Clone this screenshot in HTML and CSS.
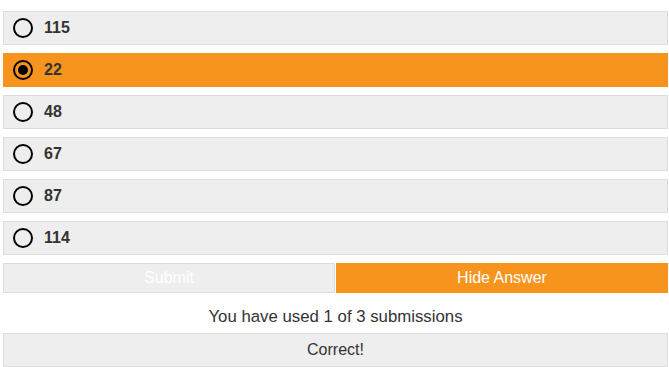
FILE: index.html
```html
<!DOCTYPE html>
<html>
<head>
<meta charset="utf-8">
<link rel="stylesheet" href="styles.css">
</head>
<body>
<div class="quiz">
  <div class="options">
    <label class="option"><span class="radio"></span><span class="val">115</span></label>
    <label class="option selected"><span class="radio checked"></span><span class="val">22</span></label>
    <label class="option"><span class="radio"></span><span class="val">48</span></label>
    <label class="option"><span class="radio"></span><span class="val">67</span></label>
    <label class="option"><span class="radio"></span><span class="val">87</span></label>
    <label class="option"><span class="radio"></span><span class="val">114</span></label>
  </div>
  <div class="actions">
    <button class="btn btn-submit">Submit</button>
    <button class="btn btn-hide">Hide Answer</button>
  </div>
  <div class="used">You have used 1 of 3 submissions</div>
  <div class="result">Correct!</div>
</div>
</body>
</html>
```
FILE: styles.css
```css
html, body {
  margin: 0;
  padding: 0;
  background: #fff;
}
body {
  font-family: "Liberation Sans", Arial, sans-serif;
  color: #333;
}
.quiz {
  padding: 11px 1px 0 3px;
  display: flex;
  flex-direction: column;
}
.options {
  display: flex;
  flex-direction: column;
  gap: 8px;
}
.option {
  box-sizing: border-box;
  height: 34px;
  display: flex;
  align-items: center;
  background: #eeeeee;
  border: 1px solid #dddddd;
  padding-left: 9px;
}
.option.selected {
  background: #f7941e;
  border-color: #f7941e;
}
.radio {
  box-sizing: border-box;
  width: 20px;
  height: 20px;
  border: 2px solid #000;
  border-radius: 50%;
  display: flex;
  align-items: center;
  justify-content: center;
  flex: none;
}
.radio.checked::after {
  content: "";
  width: 10px;
  height: 10px;
  border-radius: 50%;
  background: #000;
}
.val {
  margin-left: 11px;
  font-weight: bold;
  font-size: 16px;
  color: #333;
}
.actions {
  margin-top: 8px;
  display: flex;
  gap: 1px;
}
.btn {
  flex: 1;
  box-sizing: border-box;
  height: 30px;
  font-family: "Liberation Sans", Arial, sans-serif;
  font-size: 16px;
  color: #fff;
  padding: 0;
  margin: 0;
}
.btn-submit {
  background: #eeeeee;
  border: 1px solid #dddddd;
}
.btn-hide {
  background: #f7941e;
  border: 1px solid #f7941e;
}
.used {
  height: 40px;
  box-sizing: border-box;
  padding-top: 7px;
  line-height: 33px;
  text-align: center;
  font-size: 16.8px;
  color: #333;
}
.result {
  box-sizing: border-box;
  height: 34px;
  line-height: 32px;
  text-align: center;
  font-size: 16px;
  background: #eeeeee;
  border: 1px solid #dddddd;
  color: #333;
}
```
